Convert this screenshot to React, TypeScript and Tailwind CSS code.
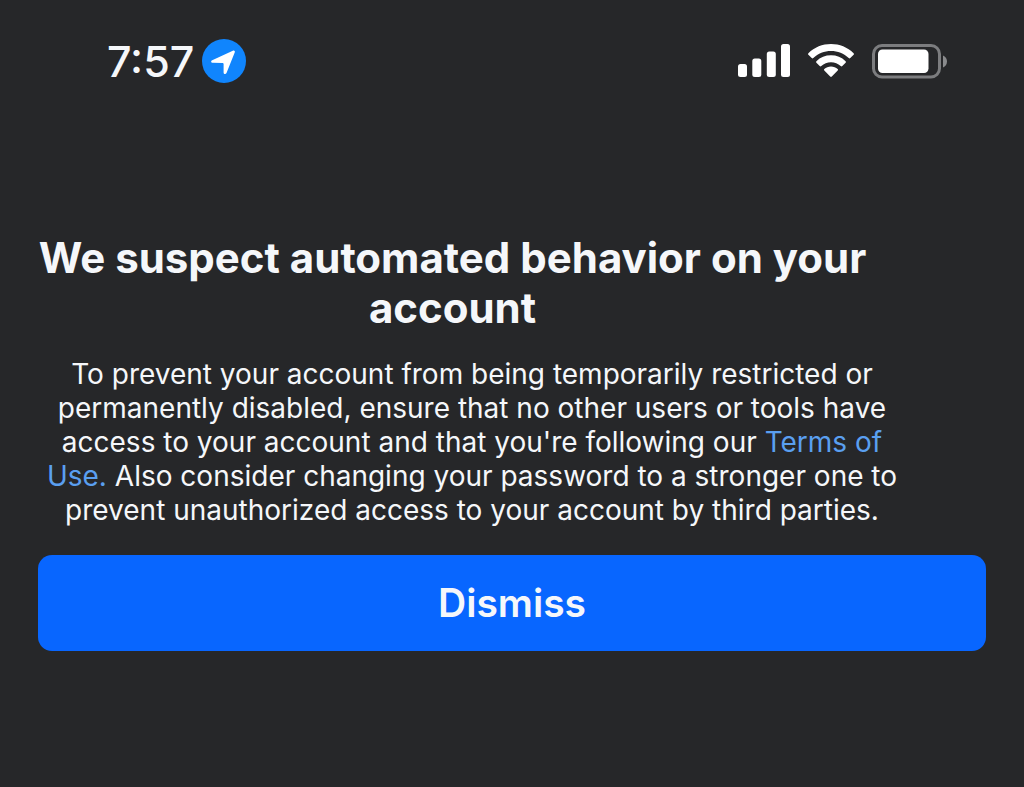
function LocationBadge() {
  return (
    <svg viewBox="0 0 44 44" className="size-11 shrink-0" aria-hidden="true">
      <circle cx="22" cy="22" r="22" fill="#1085fd" />
      <path
        d="M10.200 21.200 30.800 11.700c1.500-.6 2.500.5 1.900 1.900L24.500 34c-.7 1.600-2.900 1.300-2.900-.5v-8.300c0-.8-.4-1.200-1.200-1.200l-9.700-.2c-1.700 0-2.200-1.900-.5-2.600z"
        fill="#fff"
      />
    </svg>
  )
}

function SignalIcon() {
  return (
    <svg viewBox="0 0 52 34" className="h-[34px] w-[52px]" fill="#fff" aria-hidden="true">
      <rect x="0" y="20" width="9" height="13" rx="2.5" />
      <rect x="14.300" y="14.500" width="9" height="18.500" rx="2.5" />
      <rect x="28.800" y="7.500" width="9" height="25.500" rx="2.5" />
      <rect x="43" y="0" width="9" height="33" rx="2.5" />
    </svg>
  )
}

function WifiIcon() {
  return (
    <svg viewBox="0 0 46 34" className="h-[34px] w-[46px]" fill="#fff" aria-hidden="true">
      <path d="M.4 9.200C6.400 3.200 14.500 0 23 0s16.600 3.200 22.600 9.200c.5.5.5 1.100 0 1.600l-3.300 3.300c-.5.5-1.100.5-1.600 0C35.900 9.500 29.700 7 23 7S10.100 9.500 5.300 14.100c-.5.5-1.100.5-1.600 0L.4 10.800c-.5-.5-.5-1.100 0-1.600z" />
      <path d="M8.400 17.200C12.300 13.300 17.500 11.300 23 11.300s10.700 2 14.600 5.900c.5.5.5 1.100 0 1.600l-3.300 3.300c-.5.5-1.100.5-1.600 0-2.600-2.500-6-3.900-9.700-3.900s-7.100 1.400-9.700 3.900c-.5.5-1.100.5-1.600 0l-3.300-3.300c-.5-.5-.5-1.100 0-1.600z" />
      <path d="M16.300 25c1.800-1.700 4.100-2.600 6.700-2.600s4.900.9 6.700 2.600c.5.5.5 1.100 0 1.600l-5.900 5.900c-.6.6-1 .6-1.600 0l-5.900-5.900c-.5-.5-.5-1.100 0-1.600z" />
    </svg>
  )
}

function BatteryIcon() {
  return (
    <svg viewBox="0 0 75 35" className="h-[35px] w-[75px]" aria-hidden="true">
      <rect x="1.500" y="1.500" width="66" height="31.500" rx="8.500" fill="none" stroke="#7c7d7f" strokeWidth="3" />
      <rect x="6" y="5.500" width="50.500" height="23.500" rx="4.500" fill="#fff" />
      <path d="M71 11.500c2.400.8 4 3.200 4 6s-1.600 5.200-4 6z" fill="#8a8b8d" />
    </svg>
  )
}

function StatusBar() {
  return (
    <header className="flex items-center justify-between pt-9 pr-[77px] pl-[107px]">
      <div className="flex items-center gap-2">
        <time className="text-[43px] leading-[50px] font-medium">7:57</time>
        <LocationBadge />
      </div>
      <div className="flex items-center gap-[18px]">
        <SignalIcon />
        <WifiIcon />
        <BatteryIcon />
      </div>
    </header>
  )
}

export default function App() {
  return (
    <div className="min-h-screen bg-[#262729] font-['Inter','Liberation_Sans',sans-serif] text-[#f5f7fa]">
      <StatusBar />

      <main className="px-[38px] pt-[147px] pb-16">
        <h1 className="max-w-[829px] text-center text-[42px] leading-[50px] font-bold">
          We suspect automated behavior on your account
        </h1>

        <p className="mt-6 max-w-[868px] text-center text-[28px] leading-[34px]">
          To prevent your account from being temporarily restricted or
          <br />
          permanently disabled, ensure that no other users or tools have
          <br />
          access to your account and that you&apos;re following our{' '}
          <a href="#terms" className="text-[#5a9ff0]">
            Terms of
            <br />
            Use.
          </a>{' '}
          Also consider changing your password to a stronger one to
          <br />
          prevent unauthorized access to your account by third parties.
        </p>

        <button
          type="button"
          className="mt-7 h-24 w-full rounded-[14px] bg-[#0866ff] text-[39px] font-semibold"
        >
          Dismiss
        </button>
      </main>
    </div>
  )
}
